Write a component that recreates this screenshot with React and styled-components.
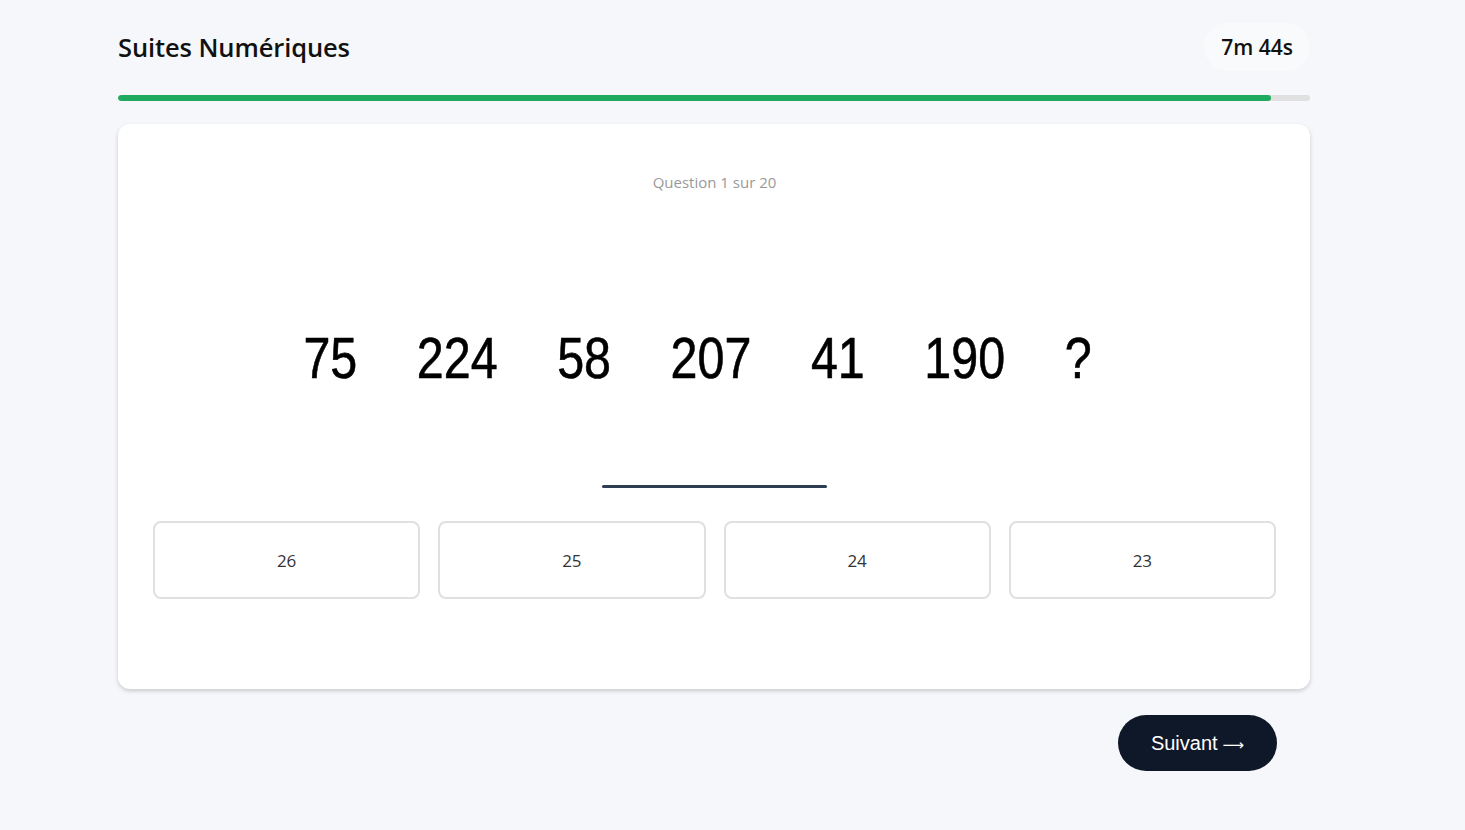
import React from "react";
import styled, { createGlobalStyle } from "styled-components";

const GlobalStyle = createGlobalStyle`
  html, body {
    margin: 0;
    padding: 0;
    background: #f5f7fa;
    font-family: "Open Sans", "Noto Sans", sans-serif;
    color: #111;
  }
`;

const Page = styled.main`
  width: 1192px;
  padding: 22px 0 40px 118px;
`;

const Header = styled.header`
  display: flex;
  align-items: center;
  justify-content: space-between;
  height: 50px;
`;

const Title = styled.h1`
  margin: 0;
  font-size: 25.5px;
  font-weight: 600;
  letter-spacing: -0.1px;
  color: #111;
`;

const Timer = styled.div`
  padding: 10px 17px;
  border-radius: 24px;
  background: #f9fafc;
  font-size: 21px;
  font-weight: 600;
  color: #111;
`;

const Track = styled.div`
  margin-top: 23px;
  height: 6px;
  border-radius: 3px;
  background: #e0e0e0;
  overflow: hidden;
`;

const Fill = styled.div`
  height: 100%;
  border-radius: 3px;
  background: #1fab5f;
`;

const Card = styled.section`
  margin-top: 23px;
  background: #fff;
  border-radius: 12px;
  box-shadow: 0 2px 4px rgba(0, 0, 0, 0.18);
  padding: 48px 34px 90px 35px;
  display: flex;
  flex-direction: column;
  align-items: center;
`;

const Counter = styled.div`
  font-size: 15px;
  line-height: 20px;
  color: #999;
`;

const Sequence = styled.div`
  margin-top: 138px;
  align-self: stretch;
  display: flex;
  justify-content: center;
  gap: 70px;
  padding-right: 40px;
  font-family: "Liberation Sans", Arial, sans-serif;
  font-size: 57px;
  line-height: 1;
  color: #000;
  -webkit-text-stroke: 0.6px #000;
  transform: scaleX(0.85);
`;

const Blank = styled.div`
  margin-top: 98px;
  width: 225px;
  height: 3px;
  border-radius: 2px;
  background: #2c3e50;
`;

const Options = styled.div`
  margin-top: 33px;
  align-self: stretch;
  display: grid;
  grid-template-columns: repeat(4, 1fr);
  gap: 18px;
`;

const Option = styled.button`
  height: 78px;
  border: 2px solid #e0e0e0;
  border-radius: 8px;
  background: #fff;
  font-family: "Open Sans", "Noto Sans", sans-serif;
  font-size: 17px;
  color: #333;
  cursor: pointer;
`;

const Footer = styled.div`
  margin-top: 26px;
  padding-right: 33px;
  display: flex;
  justify-content: flex-end;
`;

const NextButton = styled.button`
  width: 159px;
  height: 56px;
  border: none;
  border-radius: 28px;
  background: #0f1828;
  color: #fff;
  font-family: "Liberation Sans", Arial, sans-serif;
  font-size: 20px;
  cursor: pointer;
`;

const Arrow = styled.span`
  font-family: "DejaVu Sans", sans-serif;
  font-size: 15px;
  margin-left: 5px;
`;

const numbers = ["75", "224", "58", "207", "41", "190", "?"];
const choices = ["26", "25", "24", "23"];

export default function App() {
  const progress = 96.7;
  return (
    <>
      <GlobalStyle />
      <Page>
        <Header>
          <Title>Suites Numériques</Title>
          <Timer>7m 44s</Timer>
        </Header>
        <Track>
          <Fill style={{ width: `${progress}%` }} />
        </Track>
        <Card>
          <Counter>Question 1 sur 20</Counter>
          <Sequence>
            {numbers.map((n, i) => (
              <span key={i}>{n}</span>
            ))}
          </Sequence>
          <Blank />
          <Options>
            {choices.map((c) => (
              <Option key={c}>{c}</Option>
            ))}
          </Options>
        </Card>
        <Footer>
          <NextButton>
            Suivant<Arrow>⟶</Arrow>
          </NextButton>
        </Footer>
      </Page>
    </>
  );
}
